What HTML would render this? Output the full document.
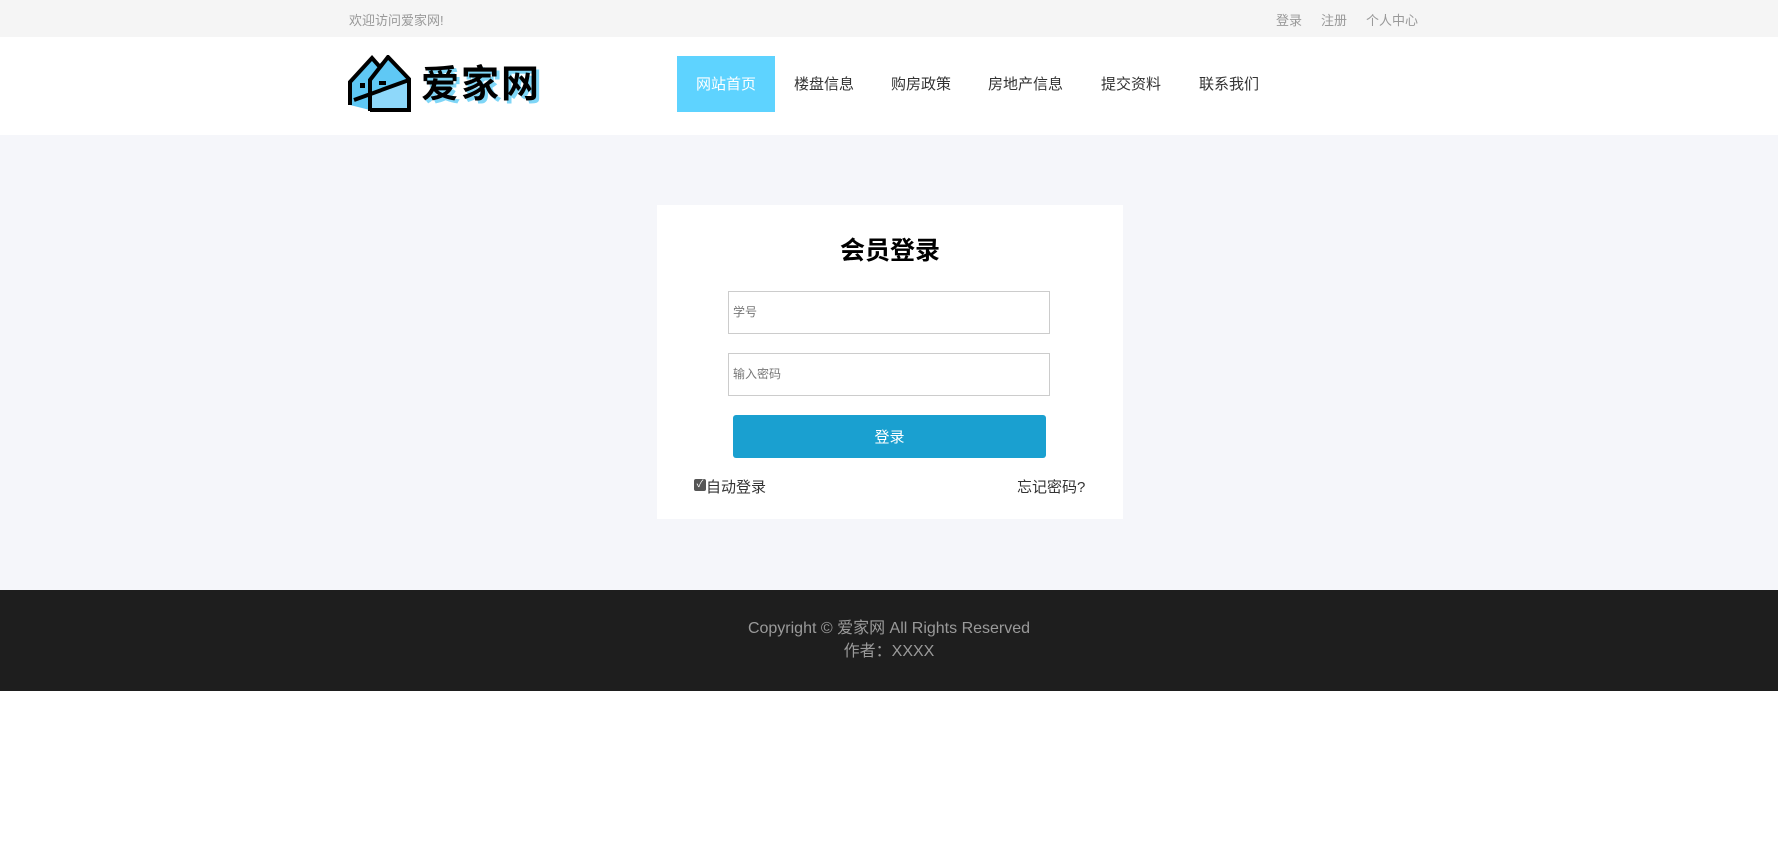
<!DOCTYPE html>
<html><head><meta charset="utf-8">
<style>
*{margin:0;padding:0;box-sizing:border-box}
body{width:1778px;height:858px;background:#fff;font-family:"Liberation Sans","Noto Sans CJK SC",sans-serif;position:relative;overflow:hidden}
.a{position:absolute}
.top{left:0;top:0;width:1778px;height:37px;background:#f5f5f5;font-size:13px;color:#999}
.hdr{left:0;top:37px;width:1778px;height:98px;background:#fff}
.main{left:0;top:135px;width:1778px;height:455px;background:#f5f6fa}
.foot{left:0;top:590px;width:1778px;height:101px;background:#1e1e1e;color:#9a9a9a;font-size:16px;text-align:center}
.nav{font-size:15px;color:#333;top:75px;line-height:20px}
.inp{left:728px;width:322px;height:43px;border:1px solid #ccc;background:#fff;font-size:12px;color:#777;padding-left:4px;line-height:41px}
</style></head><body>
<div class="a top">
 <span class="a" style="left:349px;top:10px">欢迎访问爱家网!</span>
 <span class="a" style="left:1276px;top:10px">登录</span>
 <span class="a" style="left:1321px;top:10px">注册</span>
 <span class="a" style="left:1366px;top:10px">个人中心</span>
</div>
<div class="a hdr"></div>
<svg class="a" style="left:348px;top:55px" width="66" height="59" viewBox="0 0 66 59">
 <polygon points="2,27 24,3 30,10 40,2 61,24 61,55 22,55 2,50" fill="#5fc8f5"/>
 <polygon points="22,55 22,40 61,25 61,55" fill="#8ed8fa"/>
 <path d="M2,50 V27 L24,3 L31,11 M22,56 V25 L40,2 L61,24 V55 H22 M6,45 L61,25" fill="none" stroke="#000" stroke-width="4" stroke-linejoin="miter"/>
 <rect x="12" y="28" width="5" height="5" fill="#000"/>
 <rect x="31" y="26" width="7" height="4" fill="#000"/>
</svg>
<div class="a" style="left:421px;top:63px;font-size:38px;font-weight:bold;color:#000;letter-spacing:2px;text-shadow:3px 3px 0 #7fd6f7;line-height:44px">爱家网</div>
<div class="a" style="left:677px;top:56px;width:98px;height:56px;background:#5ed3ff"></div>
<span class="a nav" style="left:696px;color:#fff">网站首页</span>
<span class="a nav" style="left:794px">楼盘信息</span>
<span class="a nav" style="left:891px">购房政策</span>
<span class="a nav" style="left:988px">房地产信息</span>
<span class="a nav" style="left:1101px">提交资料</span>
<span class="a nav" style="left:1199px">联系我们</span>
<div class="a main"></div>
<div class="a" style="left:657px;top:205px;width:466px;height:314px;background:#fff"></div>
<div class="a" style="left:657px;top:235px;width:466px;text-align:center;font-size:25px;font-weight:bold;color:#000;line-height:32px">会员登录</div>
<div class="a inp" style="top:291px">学号</div>
<div class="a inp" style="top:353px">输入密码</div>
<div class="a" style="left:733px;top:415px;width:313px;height:43px;background:#1aa0d0;border-radius:3px;color:#fff;font-size:15px;text-align:center;line-height:45px">登录</div>
<div class="a" style="left:694px;top:479px;width:12px;height:12px;background:#555;border-radius:2px;color:#fff;font-size:10px;line-height:12px;text-align:center">✓</div>
<span class="a" style="left:706px;top:476px;font-size:15px;color:#333">自动登录</span>
<span class="a" style="left:1017px;top:476px;font-size:15px;color:#333">忘记密码?</span>
<div class="a foot"><div style="margin-top:27px;line-height:23px">Copyright © 爱家网 All Rights Reserved<br>作者：XXXX</div></div>
</body></html>
